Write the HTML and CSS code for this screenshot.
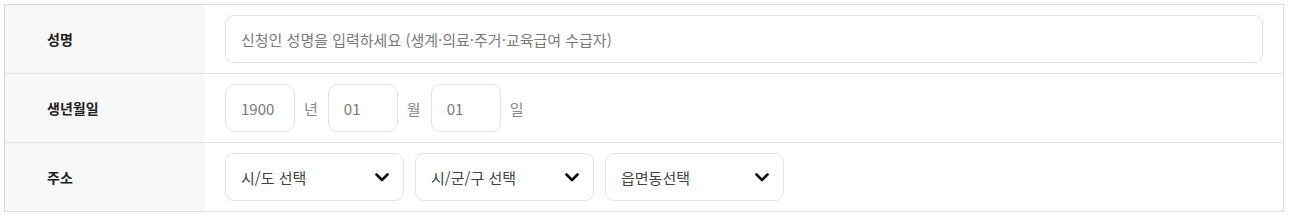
FILE: index.html
```html
<!DOCTYPE html>
<html lang="ko">
<head>
    <meta charset="UTF-8">
    <meta name="viewport" content="width=device-width, initial-scale=1.0">
    <title>신청인 정보</title>
    <link rel="stylesheet" href="styles.css">
</head>
<body>
    <div class="form-wrap">
        <table class="form-table">
            <tr>
                <th>성명</th>
                <td>
                    <input type="text" class="text-input full" placeholder="신청인 성명을 입력하세요 (생계·의료·주거·교육급여 수급자)">
                </td>
            </tr>
            <tr>
                <th>생년월일</th>
                <td>
                    <div class="date-row">
                        <input type="text" class="text-input date" placeholder="1900">
                        <span class="unit">년</span>
                        <input type="text" class="text-input date" placeholder="01">
                        <span class="unit">월</span>
                        <input type="text" class="text-input date" placeholder="01">
                        <span class="unit">일</span>
                    </div>
                </td>
            </tr>
            <tr>
                <th>주소</th>
                <td>
                    <div class="addr-row">
                        <div class="select-box">
                            <select><option>시/도 선택</option></select>
                            <svg class="chevron" width="14" height="9" viewBox="0 0 14 9"><polyline points="1.5,1.5 7,7 12.5,1.5" fill="none" stroke="#111" stroke-width="2.6" stroke-linecap="round" stroke-linejoin="round"/></svg>
                        </div>
                        <div class="select-box">
                            <select><option>시/군/구 선택</option></select>
                            <svg class="chevron" width="14" height="9" viewBox="0 0 14 9"><polyline points="1.5,1.5 7,7 12.5,1.5" fill="none" stroke="#111" stroke-width="2.6" stroke-linecap="round" stroke-linejoin="round"/></svg>
                        </div>
                        <div class="select-box">
                            <select><option>읍면동선택</option></select>
                            <svg class="chevron" width="14" height="9" viewBox="0 0 14 9"><polyline points="1.5,1.5 7,7 12.5,1.5" fill="none" stroke="#111" stroke-width="2.6" stroke-linecap="round" stroke-linejoin="round"/></svg>
                        </div>
                    </div>
                </td>
            </tr>
        </table>
    </div>
</body>
</html>
```

FILE: styles.css
```css
body {
    margin: 0;
    background: #fff;
    font-family: "Noto Sans CJK KR", "Noto Sans", sans-serif;
    color: #222;
}
.form-wrap {
    padding: 4px 5px 4px 4px;
}
.form-table {
    width: 100%;
    border-collapse: collapse;
    border: 1px solid #dcdcdc;
}
.form-table tr {
    border-bottom: 1px solid #e2e2e2;
}
.form-table th {
    width: 158px;
    padding: 0 0 0 42px;
    background: #f7f7f7;
    text-align: left;
    font-size: 14px;
    font-weight: 700;
    color: #222;
}
.form-table td {
    padding: 10px 20px;
    height: 48px;
}
.text-input {
    box-sizing: border-box;
    height: 48px;
    padding: 0 15px;
    border: 1px solid #e3e3e3;
    border-radius: 9px;
    font-family: inherit;
    font-size: 15px;
    color: #333;
    outline: none;
}
.text-input::placeholder {
    color: #7a7a7a;
}
.text-input.full {
    width: 100%;
}
.date-row,
.addr-row {
    display: flex;
    align-items: center;
    gap: 10px;
}
.addr-row {
    gap: 11px;
}
.date-row {
    gap: 9px;
}
.text-input.date {
    width: 70px;
}
.unit {
    font-size: 15px;
    color: #888;
    margin-right: 1px;
}
.select-box {
    position: relative;
    width: 179px;
}
.select-box select {
    box-sizing: border-box;
    width: 100%;
    height: 48px;
    padding: 0 15px;
    border: 1px solid #e3e3e3;
    border-radius: 9px;
    background: #fff;
    font-family: inherit;
    font-size: 15px;
    color: #444;
    appearance: none;
    -webkit-appearance: none;
    outline: none;
}
.chevron {
    position: absolute;
    right: 15px;
    top: 20px;
    pointer-events: none;
}
```
